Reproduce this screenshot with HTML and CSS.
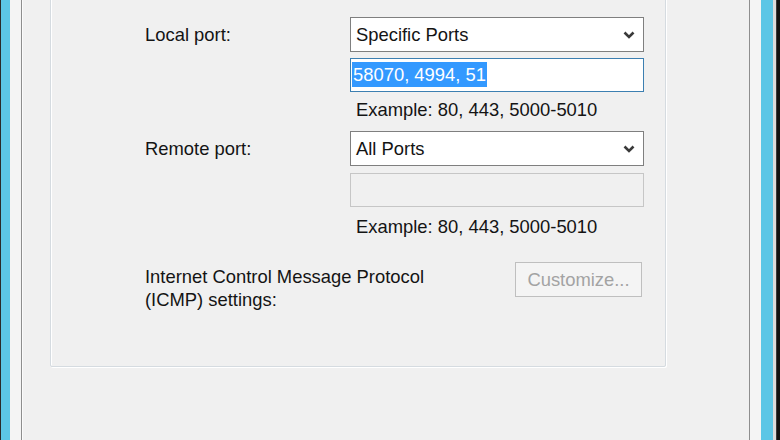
FILE: index.html
```html
<!DOCTYPE html>
<html lang="en">
<head>
  <meta charset="UTF-8" />
  <meta name="viewport" content="width=device-width, initial-scale=1.0"/>
  <title>Protocols and Ports</title>
  <link rel="stylesheet" href="styles.css">
</head>
<body>

  <div class="window">
    <div class="edge-l"></div>
    <div class="blue-l"></div>
    <div class="pad-l"></div>

    <div class="page">
      <fieldset class="group">

        <div class="row">
          <label class="label">Local port:</label>
          <div class="controls">
            <div class="combo">
              <span>Specific Ports</span>
              <svg class="chevron" width="12" height="8" viewBox="0 0 12 8">
                <polyline points="1.5,1.5 6,6 10.5,1.5" fill="none" stroke="#3a3a3a" stroke-width="2.6"/>
              </svg>
            </div>
            <div class="textbox focused"><span class="selected">58070, 4994, 51</span></div>
            <p class="hint">Example: 80, 443, 5000-5010</p>
          </div>
        </div>

        <div class="row remote">
          <label class="label">Remote port:</label>
          <div class="controls">
            <div class="combo">
              <span>All Ports</span>
              <svg class="chevron" width="12" height="8" viewBox="0 0 12 8">
                <polyline points="1.5,1.5 6,6 10.5,1.5" fill="none" stroke="#3a3a3a" stroke-width="2.6"/>
              </svg>
            </div>
            <div class="textbox disabled"></div>
            <p class="hint hint-2">Example: 80, 443, 5000-5010</p>
          </div>
        </div>

        <div class="row icmp">
          <label class="label label-2">Internet Control Message Protocol<br>(ICMP) settings:</label>
          <button class="btn" disabled>Customize...</button>
        </div>

      </fieldset>
    </div>

    <div class="pad-r"></div>
    <div class="blue-r"></div>
    <div class="edge-r"></div>
  </div>

</body>
</html>
```

FILE: styles.css
```css
* { box-sizing: border-box; }
body {
  margin: 0;
  background: #f0f0f0;
  font-family: 'Liberation Sans', Arial, sans-serif;
  font-size: 18.4px;
  color: #141414;
}
.window {
  display: flex;
  height: 440px;
  overflow: hidden;
}
.edge-l { width: 1px; background: #2a2a2a; }
.blue-l { width: 9px; background: #5cc6e6; }
.pad-l { width: 11px; background: #f4f4f4; }
.page {
  flex: 1;
  background: #f0f0f0;
  border-left: 1px solid #8e8e8e;
  border-right: 1px solid #8e8e8e;
  box-shadow: inset 1px 0 0 #fbfbfb;
  overflow: hidden;
}
.pad-r { width: 11px; background: #f4f4f4; }
.blue-r { width: 12px; background: #5cc6e6; }
.edge-r { width: 4px; background: #dcdcdc; border-right: 1px solid #3a3a3a; }
.window::after { content: ""; width: 3px; background: #111; }

/* group box, its top edge is scrolled out of view */
.group {
  margin: -10px 0 0 28px;
  width: 616px;
  height: 377px;
  padding: 26px 0 0 94px;
  border: 1px solid #d5dbe0;
  box-shadow: 1px 1px 0 #fff, inset 1px 1px 0 #fff;
  border-radius: 2px;
}

.row { display: flex; }
.label {
  width: 205px;
  line-height: 35px;
}
.controls {
  width: 294px;
  display: flex;
  flex-direction: column;
}

.combo {
  height: 35px;
  background: #fff;
  border: 1px solid #7f7f7f;
  display: flex;
  align-items: center;
  justify-content: space-between;
  padding: 0 8px 0 5px;
  line-height: 33px;
}
.chevron { display: block; }

.textbox {
  height: 34px;
  margin-top: 6px;
  border: 1px solid #adadad;
  padding: 0 1px;
  line-height: 32px;
  background: #fff;
}
.textbox.focused { border-color: #3c7fb1; }
.textbox.disabled {
  background: #f0f0f0;
  border-color: #c6c6c6;
  margin-top: 7px;
}
.selected {
  background: #3399ff;
  color: #fff;
  padding: 2px 1px;
}

.hint {
  margin: 8px 0 0 6px;
  line-height: 20px;
}
.hint-2 { margin-top: 10px; }

.remote { margin-top: 11px; }
.icmp {
  margin-top: 25px;
  padding-right: 23px;
  align-items: flex-start;
}
.label-2 {
  flex: 1;
  width: auto;
  white-space: nowrap;
  line-height: 23px;
  padding-top: 3px;
}
.btn {
  width: 127px;
  height: 35px;
  background: #f4f4f4;
  border: 1px solid #bfbfbf;
  color: #a3a3a3;
  font: inherit;
}
```
